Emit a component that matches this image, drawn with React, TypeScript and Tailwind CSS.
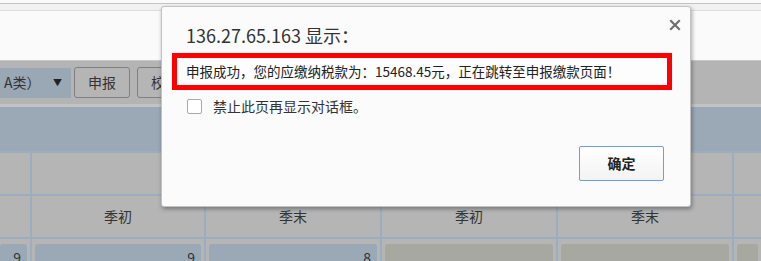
const font = { fontFamily: '"Noto Sans CJK SC", "Noto Sans", sans-serif' }

export default function App() {
  const cols = ['', '季初', '季末', '季初', '季末', '']
  return (
    <div className="relative w-[761px] h-[261px] overflow-hidden bg-[#fafafa]" style={font}>
      {/* page behind the dialog */}
      <div className="h-[3px] bg-[#fafafa]" />
      <div className="h-px bg-[#c4c4c4]" />
      <div className="h-[6px] bg-[#f1f1f1]" />
      <div className="h-px bg-[#dedede]" />
      <div className="h-[49px] bg-[#fafafa]" />

      <div className="h-[44px] bg-[#b4b4b4] border-t border-[#c9c9c9] flex items-center gap-[3px] text-[14px] text-[#333]">
        <div className="w-[71px] h-[30px] bg-[#9aa7b5] flex items-center justify-between pl-[4px] pr-[9px]">
          <span>A类）</span>
          <span className="text-[9px] text-[#222]">▼</span>
        </div>
        <div className="w-[56px] h-[31px] rounded-[3px] border border-[#808080] bg-[#b5b5b5] flex items-center justify-center">
          申报
        </div>
        <div className="ml-[4px] w-[56px] h-[31px] rounded-[3px] border border-[#808080] bg-[#b5b5b5] flex items-center justify-center">
          校验
        </div>
      </div>
      <div className="h-[3px] bg-[#c3c3c3]" />
      <div className="h-[44px] bg-[#9ba8b6]" />

      <div className="grid grid-cols-[30px_172px_174px_174px_174px_27px] grid-rows-[41px_41px_40px] gap-[2px] bg-[#9dadc0] border-t-2 border-[#9dadc0] text-[14px] text-[#333]">
        {cols.map((_, i) => (
          <div key={'a' + i} className="bg-[#b5b5b5]" />
        ))}
        {cols.map((c, i) => (
          <div key={'b' + i} className="bg-[#b5b5b5] flex items-center justify-center">
            {c}
          </div>
        ))}
        {['9', '9', '8', '', '', ''].map((v, i) => (
          <div key={'c' + i} className={i === 0 ? 'bg-[#b5b5b5] pt-[5px] pr-[3px]' : 'bg-[#b5b5b5] pt-[5px] px-[3px]'}>
            <div
              className={
                i < 3
                  ? 'h-full rounded-[3px] bg-[#9ba8b6] flex justify-end pr-[6px] pt-[4px] leading-[18px]'
                  : 'h-full rounded-[3px] bg-[#a8a8a2]'
              }
            >
              {v}
            </div>
          </div>
        ))}
      </div>

      {/* alert dialog */}
      <div className="absolute left-[161px] top-[6px] w-[530px] h-[201px] bg-[#fbfbfb] border border-[#c2c2c2] rounded-[3px] shadow-[1px_2px_4px_rgba(0,0,0,0.35)] flex flex-col">
        <div className="absolute left-[507px] top-[12px] w-[12px] h-[12px]">
          <svg viewBox="0 0 12 12" width="12" height="12">
            <path d="M2 2 L10 10 M10 2 L2 10" stroke="#6f6f6f" strokeWidth="2.2" strokeLinecap="square" />
          </svg>
        </div>
        <div className="mt-[16px] pl-[24px] h-[24px] leading-[24px] text-[18px] text-[#333]">
          136.27.65.163 显示：
        </div>
        <div className="mt-[6px] ml-[10px] w-[500px] h-[37px] border-[5px] border-[#ff0000] bg-[#fdfdfd] flex items-center pl-[9px] text-[13.5px] text-[#222]">
          申报成功，您的应缴纳税款为：15468.45元，正在跳转至申报缴款页面！
        </div>
        <div className="mt-[9px] ml-[25px] h-[15px] flex items-center gap-[11px] text-[14px] text-[#333]">
          <div className="w-[15px] h-[15px] rounded-[2px] border border-[#a9a9a9] bg-white" />
          <span>禁止此页再显示对话框。</span>
        </div>
        <div className="mt-[32px] ml-[417px] w-[85px] h-[35px] rounded-[2px] border border-[#6f9be8] bg-gradient-to-b from-[#ffffff] to-[#f3f3f3] flex items-center justify-center text-[14px] font-bold text-[#222]">
          确定
        </div>
      </div>
    </div>
  )
}
